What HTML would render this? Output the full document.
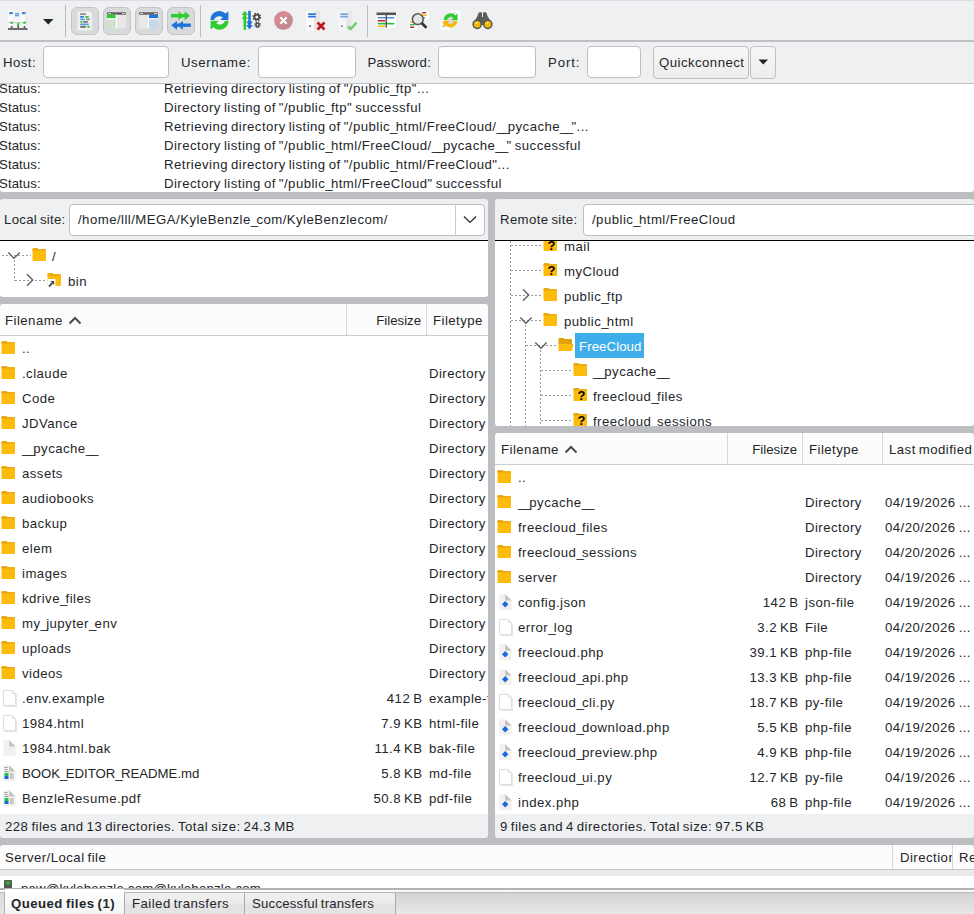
<!DOCTYPE html>
<html><head><meta charset="utf-8"><style>
html,body{margin:0;padding:0;width:974px;height:914px;overflow:hidden;background:#eff0f1}
div{position:absolute}

.u{letter-spacing:-1.7px}
.t{font-family:"Liberation Sans",sans-serif;font-size:13.2px;letter-spacing:0.46px;line-height:19px;word-spacing:-1.1px;color:#232629;white-space:nowrap}
</style></head><body>
<div style="left:0px;top:0px;width:974px;height:40px;background:#eff0f1"></div>
<div style="left:0px;top:0px;width:974px;height:1px;background:#dcdde0"></div>
<div style="left:0px;top:40px;width:974px;height:2px;background:#bfc0c3"></div>
<svg style="position:absolute;left:7px;top:9px" width="22" height="23" viewBox="0 0 22 23"><rect x="1" y="1.7" width="5.3" height="15" fill="#fafafa"/><rect x="7.1" y="3" width="5.5" height="13.7" fill="#f4f4f4"/><rect x="13.5" y="1.7" width="6.8" height="15" fill="#f8f8f8"/><rect x="18.6" y="1.7" width="1.7" height="15" fill="#e6e6e6"/><rect x="2" y="3" width="4" height="2.2" rx="1" fill="#3f8ad8"/><rect x="8" y="4.1" width="4" height="1.3" fill="#3f8ad8"/><rect x="8" y="6" width="4" height="1.3" fill="#5a9de0"/><rect x="14.7" y="3" width="4" height="2.2" rx="1" fill="#3f8ad8"/><rect x="1" y="13.3" width="19" height="0.8" fill="#c4c4c4"/><rect x="3.9" y="17" width="1.6" height="3" fill="#555"/><rect x="10.4" y="16" width="1.6" height="4" fill="#555"/><rect x="16.7" y="17" width="1.6" height="3" fill="#555"/><rect x="1" y="19" width="19.5" height="2" fill="#6a6a6a"/><circle cx="4.7" cy="13.7" r="1.3" fill="#33cc44"/><circle cx="11.2" cy="15.1" r="1.3" fill="#33cc44"/><circle cx="17.5" cy="13.7" r="1.3" fill="#33cc44"/></svg>
<svg style="position:absolute;left:43px;top:19px" width="11" height="6" viewBox="0 0 11 6"><path d="M0 0H10.5L5.25 5.5Z" fill="#232629"/></svg>
<div style="left:65px;top:5px;width:1px;height:32px;background:#b9babc"></div>
<div style="left:71px;top:7px;width:28px;height:28px;background:#d9dadc;border:1px solid #c3c4c6;border-radius:6px;box-sizing:border-box"></div>
<div style="left:103px;top:7px;width:28px;height:28px;background:#d9dadc;border:1px solid #c3c4c6;border-radius:6px;box-sizing:border-box"></div>
<div style="left:135px;top:7px;width:28px;height:28px;background:#d9dadc;border:1px solid #c3c4c6;border-radius:6px;box-sizing:border-box"></div>
<div style="left:167px;top:7px;width:28px;height:28px;background:#d9dadc;border:1px solid #c3c4c6;border-radius:6px;box-sizing:border-box"></div>
<svg style="position:absolute;left:77px;top:11px" width="16" height="20" viewBox="0 0 16 20"><path d="M0.5 0.5H12L15 3.5V19.5H0.5Z" fill="#efefef"/><path d="M12 0.5L15 3.5H12Z" fill="#fff"/><rect x="3" y="2.3" width="6" height="1.8" rx="0.9" fill="#8a8a8a"/><rect x="3" y="4.9" width="4" height="1.8" rx="0.9" fill="#2a7ae2"/><rect x="8" y="4.9" width="4" height="1.8" rx="0.9" fill="#33cc33"/><rect x="3" y="7.4" width="5" height="1.8" rx="0.9" fill="#5a9de0"/><rect x="9" y="7.4" width="4" height="1.8" rx="0.9" fill="#8a8a8a"/><rect x="3" y="9.9" width="2.5" height="1.8" rx="0.9" fill="#33cc33"/><rect x="6" y="9.9" width="5" height="1.8" rx="0.9" fill="#777"/><rect x="3" y="12.4" width="9" height="1.8" rx="0.9" fill="#5a9de0"/><rect x="3" y="14.9" width="6" height="1.8" rx="0.9" fill="#666"/><rect x="10" y="14.9" width="3" height="1.8" rx="0.9" fill="#33cc33"/></svg>
<svg style="position:absolute;left:106px;top:12px" width="21" height="18" viewBox="0 0 21 18"><rect x="0.8" y="0.2" width="19.2" height="16.4" rx="1" fill="#e8e8e8"/><rect x="0.8" y="0.2" width="19.2" height="2.5" rx="1" fill="#5f5f5f"/><rect x="0.8" y="2.7" width="9" height="3.6" fill="#2ecc2e"/><rect x="0.8" y="7.3" width="9" height="9.3" fill="#cfe3cc"/><rect x="9.8" y="2.7" width="1.2" height="13.9" fill="#fff"/><rect x="0.8" y="6.3" width="9" height="1" fill="#fff"/><rect x="2" y="1" width="3" height="0.9" fill="#ddd"/><rect x="16" y="1" width="3" height="0.9" fill="#ddd"/></svg>
<svg style="position:absolute;left:138px;top:12px" width="21" height="18" viewBox="0 0 21 18"><rect x="0.8" y="0.2" width="19.2" height="16.4" rx="1" fill="#e8e8e8"/><rect x="0.8" y="0.2" width="19.2" height="2.5" rx="1" fill="#5f5f5f"/><rect x="11" y="2.7" width="9" height="3.6" fill="#1e74d8"/><rect x="11" y="7.3" width="9" height="9.3" fill="#c9d8e6"/><rect x="9.8" y="2.7" width="1.2" height="13.9" fill="#fff"/><rect x="11" y="6.3" width="9" height="1" fill="#fff"/><rect x="2" y="1" width="3" height="0.9" fill="#ddd"/><rect x="16" y="1" width="3" height="0.9" fill="#ddd"/></svg>
<svg style="position:absolute;left:170px;top:10px" width="22" height="21" viewBox="0 0 22 21"><rect x="1" y="4" width="15" height="3.4" fill="#2ecc2e"/><path d="M8.5 1.2L13.5 5.7L8.5 10.2Z" fill="#2ecc2e"/><path d="M14.6 1.2L20 5.7L14.6 10.2Z" fill="#2ecc2e"/><rect x="6" y="13.5" width="14.8" height="3.4" fill="#1e74d8"/><path d="M7 11L1.2 15.2L7 19.8Z" fill="#1e74d8"/><path d="M13 11L7.2 15.2L13 19.8Z" fill="#1e74d8"/></svg>
<div style="left:200px;top:5px;width:1px;height:32px;background:#b9babc"></div>
<svg style="position:absolute;left:209px;top:10px" width="21" height="21" viewBox="0 0 21 21"><path d="M1.4 10A9 9 0 0 1 16.6 3.6L19.4 1.2V10H11.2L13.7 7.5A5.4 5.4 0 0 0 5 10Z" fill="#1e74d8"/><path d="M19.6 10.8A9 9 0 0 1 4.4 17.2L1.6 19.6V10.8H9.8L7.3 13.3A5.4 5.4 0 0 0 16 10.8Z" fill="#2ecc2e"/></svg>
<svg style="position:absolute;left:241px;top:10px" width="21" height="21" viewBox="0 0 21 21"><rect x="2.5" y="3" width="2.6" height="16.8" fill="#2ecc2e"/><path d="M0.6 5L3.8 0.8L7 5Z" fill="#2ecc2e"/><path d="M0.6 9L3.8 5L7 9Z" fill="#2ecc2e"/><rect x="7.2" y="0.8" width="2.6" height="16" fill="#1e74d8"/><path d="M5.2 15L8.5 19.6L11.8 15Z" fill="#1e74d8"/><path d="M5.2 11.5L8.5 16L11.8 11.5Z" fill="#1e74d8"/><g fill="none" stroke="#4a4a4a"><circle cx="15.8" cy="7" r="2.4" stroke-width="1.8"/><circle cx="15.8" cy="7" r="3.6" stroke-width="1.6" stroke-dasharray="1.4 1.43"/><circle cx="16.5" cy="14.8" r="1.6" stroke-width="1.5"/><circle cx="16.5" cy="14.8" r="2.7" stroke-width="1.3" stroke-dasharray="1.1 1.02"/></g></svg>
<svg style="position:absolute;left:273px;top:10px" width="21" height="21" viewBox="0 0 21 21"><circle cx="10.5" cy="10.5" r="9.4" fill="#d88890"/><path d="M17.1 3.9A9.4 9.4 0 0 1 3.9 17.1Z" fill="#c38a90"/><path d="M7.3 7.3L13.7 13.7M13.7 7.3L7.3 13.7" stroke="#fff" stroke-width="2.2"/></svg>
<svg style="position:absolute;left:305px;top:10px" width="22" height="21" viewBox="0 0 22 21"><rect x="1" y="1" width="14" height="19.5" fill="#fbfbfb"/><rect x="9" y="1" width="6" height="19.5" fill="#e6e6e6"/><rect x="3" y="3.2" width="8" height="1.8" rx="0.9" fill="#2a78d6"/><rect x="3" y="5.8" width="8" height="1.8" rx="0.9" fill="#2a78d6"/><circle cx="5" cy="16.2" r="0.9" fill="#444"/><path d="M12.5 12.5L19.5 19.5M19.5 12.5L12.5 19.5" stroke="#c4161c" stroke-width="2.6"/></svg>
<svg style="position:absolute;left:337px;top:10px" width="22" height="21" viewBox="0 0 22 21"><rect x="1" y="1" width="14" height="19.5" fill="#f5f5f5"/><rect x="9" y="1" width="6" height="19.5" fill="#e8e8e8"/><rect x="3" y="3.2" width="8" height="1.8" rx="0.9" fill="#7aa8e0"/><rect x="3" y="5.8" width="8" height="1.8" rx="0.9" fill="#7aa8e0"/><circle cx="5" cy="16.2" r="0.9" fill="#777"/><path d="M11 16.5L13.8 19L19.5 12.5" stroke="#6fd06f" stroke-width="2.6" fill="none"/></svg>
<div style="left:367px;top:5px;width:1px;height:32px;background:#b9babc"></div>
<svg style="position:absolute;left:376px;top:12px" width="21" height="17" viewBox="0 0 21 17"><rect x="0.5" y="0.5" width="19.5" height="15" fill="#fff"/><rect x="0.5" y="0.5" width="19.5" height="2.6" fill="#555"/><rect x="1.5" y="5" width="17" height="1.6" rx="0.8" fill="#4a8fe0"/><rect x="1.5" y="8" width="8" height="1.6" rx="0.8" fill="#c9202a"/><rect x="1.5" y="10.8" width="17" height="1.6" rx="0.8" fill="#33bb44"/><rect x="1.5" y="13.4" width="8" height="1.6" rx="0.8" fill="#f5b800"/><rect x="9.6" y="2" width="1.4" height="13.5" fill="#555"/></svg>
<svg style="position:absolute;left:408px;top:10px" width="22" height="21" viewBox="0 0 22 21"><rect x="13" y="0.5" width="8" height="9" fill="#fff"/><rect x="14" y="2" width="4" height="1.4" fill="#c9202a"/><rect x="14" y="4.5" width="5" height="1.4" fill="#f5b800"/><rect x="14" y="7" width="3" height="1.4" fill="#33bb44"/><rect x="1" y="10.5" width="8" height="9" fill="#fff"/><rect x="2" y="11.5" width="3" height="1.4" fill="#f5b800"/><rect x="2" y="14" width="5" height="1.4" fill="#33bb44"/><rect x="2" y="16.5" width="4" height="1.4" fill="#c9202a"/><circle cx="9.8" cy="9.2" r="5.4" fill="#e6e6e6" stroke="#555" stroke-width="1.5"/><path d="M13.6 13L18.5 17.8" stroke="#333" stroke-width="2.6"/></svg>
<svg style="position:absolute;left:440px;top:10px" width="22" height="21" viewBox="0 0 22 21"><rect x="11" y="0.5" width="9.5" height="9.5" fill="#fff"/><rect x="12.5" y="2.5" width="4" height="1" fill="#ccc"/><rect x="12.5" y="5" width="5" height="1" fill="#ccc"/><rect x="0.5" y="10" width="9.5" height="10" fill="#fff"/><rect x="2" y="12" width="4" height="1" fill="#ccc"/><rect x="2" y="16" width="4" height="1" fill="#ccc"/><circle cx="10.5" cy="10.5" r="4" fill="#d9d9d9"/><path d="M3.8 10A6.8 6.8 0 0 1 15.6 5.6L17.6 3.6V10H11.4L13.4 8A3.6 3.6 0 0 0 7.2 10Z" fill="#2ecc2e"/><path d="M17.2 10.8A6.8 6.8 0 0 1 5.4 15.2L3.4 17.2V10.8H9.6L7.6 12.8A3.6 3.6 0 0 0 13.8 10.8Z" fill="#f5b800"/></svg>
<svg style="position:absolute;left:472px;top:11px" width="21" height="19" viewBox="0 0 21 19"><path d="M6.5 2Q8.25 0 10 2V6H11V2Q12.75 0 14.5 2L15.5 5L19.8 12.5V14H1.2V12.5L5.5 5Z" fill="#5d5d5d"/><circle cx="5.2" cy="13.3" r="4.1" fill="#f5b800" stroke="#555" stroke-width="1.5"/><circle cx="15.8" cy="13.3" r="4.1" fill="#f5b800" stroke="#555" stroke-width="1.5"/><path d="M4 13L5.5 11.2" stroke="#fff" stroke-width="1"/><path d="M14.6 13L16.1 11.2" stroke="#fff" stroke-width="1"/></svg>
<div style="left:0px;top:42px;width:974px;height:41px;background:#eff0f1"></div>
<div style="left:0px;top:83px;width:974px;height:1px;background:#c2c3c5"></div>
<div class="t" style="left:3px;top:53px;">Host:</div>
<div style="left:43px;top:46px;width:126px;height:32px;background:#fff;border:1px solid #bcbebf;border-radius:4px;box-sizing:border-box"></div>
<div class="t" style="left:181px;top:53px;letter-spacing:0.6px">Username:</div>
<div style="left:258px;top:46px;width:98px;height:32px;background:#fff;border:1px solid #bcbebf;border-radius:4px;box-sizing:border-box"></div>
<div class="t" style="left:367.5px;top:53px;letter-spacing:0.22px">Password:</div>
<div style="left:438px;top:46px;width:98px;height:32px;background:#fff;border:1px solid #bcbebf;border-radius:4px;box-sizing:border-box"></div>
<div class="t" style="left:548px;top:53px;letter-spacing:0.9px">Port:</div>
<div style="left:587px;top:46px;width:54px;height:32px;background:#fff;border:1px solid #bcbebf;border-radius:4px;box-sizing:border-box"></div>
<div style="left:653px;top:46px;width:96px;height:33px;background:linear-gradient(#f7f7f7,#ededed);border:1px solid #bfc0c2;border-radius:4px;box-sizing:border-box"></div>
<div class="t" style="left:659px;top:53px;">Quickconnect</div>
<div style="left:750px;top:46px;width:26px;height:33px;background:linear-gradient(#f7f7f7,#ededed);border:1px solid #bfc0c2;border-radius:4px;box-sizing:border-box"></div>
<svg style="position:absolute;left:757.5px;top:59px" width="11" height="7" viewBox="0 0 11 7"><path d="M0.5 0.5H10L5.25 5.5Z" fill="#232629"/></svg>
<div style="left:0px;top:84px;width:974px;height:108px;background:#fff"></div>
<div class="t" style="left:-1px;top:79px;letter-spacing:0.1px">Status:</div>
<div class="t" style="left:164px;top:79px;">Retrieving directory listing of &quot;/public<span class="u">_</span>ftp&quot;...</div>
<div class="t" style="left:-1px;top:98px;letter-spacing:0.1px">Status:</div>
<div class="t" style="left:164px;top:98px;">Directory listing of &quot;/public<span class="u">_</span>ftp&quot; successful</div>
<div class="t" style="left:-1px;top:117px;letter-spacing:0.1px">Status:</div>
<div class="t" style="left:164px;top:117px;">Retrieving directory listing of &quot;/public<span class="u">_</span>html/FreeCloud/<span class="u">_</span><span class="u">_</span>pycache<span class="u">_</span><span class="u">_</span>&quot;...</div>
<div class="t" style="left:-1px;top:136px;letter-spacing:0.1px">Status:</div>
<div class="t" style="left:164px;top:136px;">Directory listing of &quot;/public<span class="u">_</span>html/FreeCloud/<span class="u">_</span><span class="u">_</span>pycache<span class="u">_</span><span class="u">_</span>&quot; successful</div>
<div class="t" style="left:-1px;top:155px;letter-spacing:0.1px">Status:</div>
<div class="t" style="left:164px;top:155px;">Retrieving directory listing of &quot;/public<span class="u">_</span>html/FreeCloud&quot;...</div>
<div class="t" style="left:-1px;top:174px;letter-spacing:0.1px">Status:</div>
<div class="t" style="left:164px;top:174px;">Directory listing of &quot;/public<span class="u">_</span>html/FreeCloud&quot; successful</div>
<div style="left:0px;top:192px;width:974px;height:7px;background:#bdbec1"></div>
<div style="left:488px;top:199px;width:7px;height:639px;background:#bdbec1"></div>
<div style="left:0px;top:199px;width:488px;height:41px;background:#eff0f1"></div>
<div class="t" style="left:4px;top:210px;letter-spacing:0.3px">Local site:</div>
<div style="left:69px;top:204px;width:416px;height:32px;background:#fff;border:1px solid #bcbebf;border-radius:4px;box-sizing:border-box"></div>
<div style="left:455px;top:205px;width:1px;height:30px;background:#c9cacc"></div>
<div class="t" style="left:78px;top:210px;">/home/lll/MEGA/KyleBenzle<span class="u">_</span>com/KyleBenzlecom/</div>
<svg style="position:absolute;left:463px;top:215px" width="14" height="9" viewBox="0 0 14 9"><path d="M1 1.5L7 7.5L13 1.5" stroke="#232629" stroke-width="1.2" fill="none"/></svg>
<div style="left:0px;top:240px;width:488px;height:1px;background:#000"></div>
<div style="left:0px;top:241px;width:488px;height:56px;background:#fff"></div>
<div style="left:2px;top:255px;width:29px;height:1px;background:repeating-linear-gradient(90deg,#999 0 2px,transparent 2px 4px)"></div>
<svg style="position:absolute;left:7px;top:250px" width="14" height="10" viewBox="0 0 14 10"><path d="M1.3 2.6L7 8.3L12.7 2.6" stroke="#5e6063" stroke-width="1.4" fill="none"/></svg>
<svg style="position:absolute;left:32px;top:248px" width="15" height="14" viewBox="0 0 15 14"><path d="M0.5 1.2Q0.5 0.2 1.5 0.2H5.6L6.6 1.2H13.2Q14 1.2 14 2V12.2Q14 13 13.2 13H1.3Q0.5 13 0.5 12.2Z" fill="#fdbb0c"/><path d="M0.5 1.2Q0.5 0.2 1.5 0.2H5.6L6.6 1.2H13.2Q14 1.2 14 2V2.6H0.5Z" fill="#e5a50a"/></svg>
<div class="t" style="left:52px;top:247px;">/</div>
<div style="left:14px;top:260px;width:1px;height:21px;background:repeating-linear-gradient(180deg,#999 0 2px,transparent 2px 4px)"></div>
<div style="left:15px;top:280px;width:34px;height:1px;background:repeating-linear-gradient(90deg,#999 0 2px,transparent 2px 4px)"></div>
<svg style="position:absolute;left:25px;top:273px" width="10" height="14" viewBox="0 0 10 14"><path d="M2 1.3L7.7 7L2 12.7" stroke="#5e6063" stroke-width="1.4" fill="none"/></svg>
<svg style="position:absolute;left:47px;top:273px" width="15" height="14" viewBox="0 0 15 14"><path d="M0.5 1.2Q0.5 0.2 1.5 0.2H5.6L6.6 1.2H13.2Q14 1.2 14 2V12.2Q14 13 13.2 13H1.3Q0.5 13 0.5 12.2Z" fill="#fdbb0c"/><path d="M0.5 1.2Q0.5 0.2 1.5 0.2H5.6L6.6 1.2H13.2Q14 1.2 14 2V2.6H0.5Z" fill="#e5a50a"/></svg>
<svg style="position:absolute;left:47px;top:279px" width="10" height="10" viewBox="0 0 10 10"><rect x="0.5" y="0" width="8" height="8.2" fill="#fff"/><path d="M2 7.6L5.4 3.8" stroke="#4a4a4a" stroke-width="1.9" fill="none"/><path d="M3.3 2H7.2V5.9Z" fill="#4a4a4a"/></svg>
<div class="t" style="left:68px;top:272px;">bin</div>
<div style="left:0px;top:297px;width:488px;height:7px;background:#bdbec1"></div>
<div style="left:0px;top:304px;width:488px;height:31px;background:#fcfcfc"></div>
<div style="left:0px;top:335px;width:488px;height:1px;background:#cbcccd"></div>
<div style="left:346px;top:304px;width:1px;height:31px;background:#d6d7d8"></div>
<div style="left:426px;top:304px;width:1px;height:31px;background:#d6d7d8"></div>
<div class="t" style="left:5px;top:311px;">Filename</div>
<svg style="position:absolute;left:68px;top:316px" width="14" height="9" viewBox="0 0 14 9"><path d="M1.5 7.5L7 2L12.5 7.5" stroke="#4d4d4d" stroke-width="2" fill="none"/></svg>
<div class="t" style="right:553.0px;top:311px;text-align:right;letter-spacing:0">Filesize</div>
<div class="t" style="left:433px;top:311px;">Filetype</div>
<div style="left:0px;top:336px;width:488px;height:478px;background:#fff"></div>
<div style="left:0;top:0;width:974px;height:914px;clip-path:inset(336px 486px 100px 0px)">
<svg style="position:absolute;left:1px;top:341px" width="15" height="14" viewBox="0 0 15 14"><path d="M0.5 1.2Q0.5 0.2 1.5 0.2H5.6L6.6 1.2H13.2Q14 1.2 14 2V12.2Q14 13 13.2 13H1.3Q0.5 13 0.5 12.2Z" fill="#fdbb0c"/><path d="M0.5 1.2Q0.5 0.2 1.5 0.2H5.6L6.6 1.2H13.2Q14 1.2 14 2V2.6H0.5Z" fill="#e5a50a"/></svg>
<div class="t" style="left:22px;top:339px;">..</div>
<svg style="position:absolute;left:1px;top:366px" width="15" height="14" viewBox="0 0 15 14"><path d="M0.5 1.2Q0.5 0.2 1.5 0.2H5.6L6.6 1.2H13.2Q14 1.2 14 2V12.2Q14 13 13.2 13H1.3Q0.5 13 0.5 12.2Z" fill="#fdbb0c"/><path d="M0.5 1.2Q0.5 0.2 1.5 0.2H5.6L6.6 1.2H13.2Q14 1.2 14 2V2.6H0.5Z" fill="#e5a50a"/></svg>
<div class="t" style="left:22px;top:364px;">.claude</div>
<div class="t" style="left:429px;top:364px;">Directory</div>
<svg style="position:absolute;left:1px;top:391px" width="15" height="14" viewBox="0 0 15 14"><path d="M0.5 1.2Q0.5 0.2 1.5 0.2H5.6L6.6 1.2H13.2Q14 1.2 14 2V12.2Q14 13 13.2 13H1.3Q0.5 13 0.5 12.2Z" fill="#fdbb0c"/><path d="M0.5 1.2Q0.5 0.2 1.5 0.2H5.6L6.6 1.2H13.2Q14 1.2 14 2V2.6H0.5Z" fill="#e5a50a"/></svg>
<div class="t" style="left:22px;top:389px;">Code</div>
<div class="t" style="left:429px;top:389px;">Directory</div>
<svg style="position:absolute;left:1px;top:416px" width="15" height="14" viewBox="0 0 15 14"><path d="M0.5 1.2Q0.5 0.2 1.5 0.2H5.6L6.6 1.2H13.2Q14 1.2 14 2V12.2Q14 13 13.2 13H1.3Q0.5 13 0.5 12.2Z" fill="#fdbb0c"/><path d="M0.5 1.2Q0.5 0.2 1.5 0.2H5.6L6.6 1.2H13.2Q14 1.2 14 2V2.6H0.5Z" fill="#e5a50a"/></svg>
<div class="t" style="left:22px;top:414px;">JDVance</div>
<div class="t" style="left:429px;top:414px;">Directory</div>
<svg style="position:absolute;left:1px;top:441px" width="15" height="14" viewBox="0 0 15 14"><path d="M0.5 1.2Q0.5 0.2 1.5 0.2H5.6L6.6 1.2H13.2Q14 1.2 14 2V12.2Q14 13 13.2 13H1.3Q0.5 13 0.5 12.2Z" fill="#fdbb0c"/><path d="M0.5 1.2Q0.5 0.2 1.5 0.2H5.6L6.6 1.2H13.2Q14 1.2 14 2V2.6H0.5Z" fill="#e5a50a"/></svg>
<div class="t" style="left:22px;top:439px;"><span class="u">_</span><span class="u">_</span>pycache<span class="u">_</span><span class="u">_</span></div>
<div class="t" style="left:429px;top:439px;">Directory</div>
<svg style="position:absolute;left:1px;top:466px" width="15" height="14" viewBox="0 0 15 14"><path d="M0.5 1.2Q0.5 0.2 1.5 0.2H5.6L6.6 1.2H13.2Q14 1.2 14 2V12.2Q14 13 13.2 13H1.3Q0.5 13 0.5 12.2Z" fill="#fdbb0c"/><path d="M0.5 1.2Q0.5 0.2 1.5 0.2H5.6L6.6 1.2H13.2Q14 1.2 14 2V2.6H0.5Z" fill="#e5a50a"/></svg>
<div class="t" style="left:22px;top:464px;">assets</div>
<div class="t" style="left:429px;top:464px;">Directory</div>
<svg style="position:absolute;left:1px;top:491px" width="15" height="14" viewBox="0 0 15 14"><path d="M0.5 1.2Q0.5 0.2 1.5 0.2H5.6L6.6 1.2H13.2Q14 1.2 14 2V12.2Q14 13 13.2 13H1.3Q0.5 13 0.5 12.2Z" fill="#fdbb0c"/><path d="M0.5 1.2Q0.5 0.2 1.5 0.2H5.6L6.6 1.2H13.2Q14 1.2 14 2V2.6H0.5Z" fill="#e5a50a"/></svg>
<div class="t" style="left:22px;top:489px;">audiobooks</div>
<div class="t" style="left:429px;top:489px;">Directory</div>
<svg style="position:absolute;left:1px;top:516px" width="15" height="14" viewBox="0 0 15 14"><path d="M0.5 1.2Q0.5 0.2 1.5 0.2H5.6L6.6 1.2H13.2Q14 1.2 14 2V12.2Q14 13 13.2 13H1.3Q0.5 13 0.5 12.2Z" fill="#fdbb0c"/><path d="M0.5 1.2Q0.5 0.2 1.5 0.2H5.6L6.6 1.2H13.2Q14 1.2 14 2V2.6H0.5Z" fill="#e5a50a"/></svg>
<div class="t" style="left:22px;top:514px;">backup</div>
<div class="t" style="left:429px;top:514px;">Directory</div>
<svg style="position:absolute;left:1px;top:541px" width="15" height="14" viewBox="0 0 15 14"><path d="M0.5 1.2Q0.5 0.2 1.5 0.2H5.6L6.6 1.2H13.2Q14 1.2 14 2V12.2Q14 13 13.2 13H1.3Q0.5 13 0.5 12.2Z" fill="#fdbb0c"/><path d="M0.5 1.2Q0.5 0.2 1.5 0.2H5.6L6.6 1.2H13.2Q14 1.2 14 2V2.6H0.5Z" fill="#e5a50a"/></svg>
<div class="t" style="left:22px;top:539px;">elem</div>
<div class="t" style="left:429px;top:539px;">Directory</div>
<svg style="position:absolute;left:1px;top:566px" width="15" height="14" viewBox="0 0 15 14"><path d="M0.5 1.2Q0.5 0.2 1.5 0.2H5.6L6.6 1.2H13.2Q14 1.2 14 2V12.2Q14 13 13.2 13H1.3Q0.5 13 0.5 12.2Z" fill="#fdbb0c"/><path d="M0.5 1.2Q0.5 0.2 1.5 0.2H5.6L6.6 1.2H13.2Q14 1.2 14 2V2.6H0.5Z" fill="#e5a50a"/></svg>
<div class="t" style="left:22px;top:564px;">images</div>
<div class="t" style="left:429px;top:564px;">Directory</div>
<svg style="position:absolute;left:1px;top:591px" width="15" height="14" viewBox="0 0 15 14"><path d="M0.5 1.2Q0.5 0.2 1.5 0.2H5.6L6.6 1.2H13.2Q14 1.2 14 2V12.2Q14 13 13.2 13H1.3Q0.5 13 0.5 12.2Z" fill="#fdbb0c"/><path d="M0.5 1.2Q0.5 0.2 1.5 0.2H5.6L6.6 1.2H13.2Q14 1.2 14 2V2.6H0.5Z" fill="#e5a50a"/></svg>
<div class="t" style="left:22px;top:589px;">kdrive<span class="u">_</span>files</div>
<div class="t" style="left:429px;top:589px;">Directory</div>
<svg style="position:absolute;left:1px;top:616px" width="15" height="14" viewBox="0 0 15 14"><path d="M0.5 1.2Q0.5 0.2 1.5 0.2H5.6L6.6 1.2H13.2Q14 1.2 14 2V12.2Q14 13 13.2 13H1.3Q0.5 13 0.5 12.2Z" fill="#fdbb0c"/><path d="M0.5 1.2Q0.5 0.2 1.5 0.2H5.6L6.6 1.2H13.2Q14 1.2 14 2V2.6H0.5Z" fill="#e5a50a"/></svg>
<div class="t" style="left:22px;top:614px;">my<span class="u">_</span>jupyter<span class="u">_</span>env</div>
<div class="t" style="left:429px;top:614px;">Directory</div>
<svg style="position:absolute;left:1px;top:641px" width="15" height="14" viewBox="0 0 15 14"><path d="M0.5 1.2Q0.5 0.2 1.5 0.2H5.6L6.6 1.2H13.2Q14 1.2 14 2V12.2Q14 13 13.2 13H1.3Q0.5 13 0.5 12.2Z" fill="#fdbb0c"/><path d="M0.5 1.2Q0.5 0.2 1.5 0.2H5.6L6.6 1.2H13.2Q14 1.2 14 2V2.6H0.5Z" fill="#e5a50a"/></svg>
<div class="t" style="left:22px;top:639px;">uploads</div>
<div class="t" style="left:429px;top:639px;">Directory</div>
<svg style="position:absolute;left:1px;top:666px" width="15" height="14" viewBox="0 0 15 14"><path d="M0.5 1.2Q0.5 0.2 1.5 0.2H5.6L6.6 1.2H13.2Q14 1.2 14 2V12.2Q14 13 13.2 13H1.3Q0.5 13 0.5 12.2Z" fill="#fdbb0c"/><path d="M0.5 1.2Q0.5 0.2 1.5 0.2H5.6L6.6 1.2H13.2Q14 1.2 14 2V2.6H0.5Z" fill="#e5a50a"/></svg>
<div class="t" style="left:22px;top:664px;">videos</div>
<div class="t" style="left:429px;top:664px;">Directory</div>
<svg style="position:absolute;left:3px;top:690px" width="15" height="18" viewBox="0 0 15 18"><path d="M1.5 16.5H13.5V4.5" stroke="#e6e6e6" stroke-width="1.2" fill="none"/><path d="M0.5 0.5H9.5L12.5 3.5V15.5H0.5Z" fill="#fff" stroke="#dedede" stroke-width="1"/><path d="M9.5 0.5V3.5H12.5" stroke="#dedede" fill="none"/></svg>
<div class="t" style="left:22px;top:689px;">.env.example</div>
<div class="t" style="right:551.5px;top:689px;text-align:right;">412 B</div>
<div class="t" style="left:429px;top:689px;">example-file</div>
<svg style="position:absolute;left:3px;top:715px" width="15" height="18" viewBox="0 0 15 18"><path d="M1.5 16.5H13.5V4.5" stroke="#e6e6e6" stroke-width="1.2" fill="none"/><path d="M0.5 0.5H9.5L12.5 3.5V15.5H0.5Z" fill="#fff" stroke="#dedede" stroke-width="1"/><path d="M9.5 0.5V3.5H12.5" stroke="#dedede" fill="none"/></svg>
<div class="t" style="left:22px;top:714px;">1984.html</div>
<div class="t" style="right:551.5px;top:714px;text-align:right;">7.9 KB</div>
<div class="t" style="left:429px;top:714px;">html-file</div>
<svg style="position:absolute;left:3px;top:740px" width="15" height="18" viewBox="0 0 15 18"><path d="M0.2 1Q0.2 0.2 1 0.2H6.2L12.6 6.6V15.4Q12.6 16.2 11.8 16.2H1Q0.2 16.2 0.2 15.4Z" fill="#f2f1f0"/><path d="M6.2 0.2L12.6 6.6H6.2Z" fill="#c3c2bf"/></svg>
<div class="t" style="left:22px;top:739px;">1984.html.bak</div>
<div class="t" style="right:551.5px;top:739px;text-align:right;">11.4 KB</div>
<div class="t" style="left:429px;top:739px;">bak-file</div>
<svg style="position:absolute;left:3px;top:765px" width="15" height="18" viewBox="0 0 15 18"><path d="M0.2 1Q0.2 0.2 1 0.2H6.2L12.6 6.6V15.4Q12.6 16.2 11.8 16.2H1Q0.2 16.2 0.2 15.4Z" fill="#f2f1f0"/><path d="M6.2 0.2L12.6 6.6H6.2Z" fill="#c3c2bf"/></svg>
<svg style="position:absolute;left:3px;top:765px" width="15" height="18" viewBox="0 0 15 18"><rect x="1.5" y="2" width="3" height="1" fill="#9a9a9a"/><rect x="1.5" y="4" width="3" height="1" fill="#9a9a9a"/><rect x="1.5" y="6" width="4" height="1" fill="#9a9a9a"/><rect x="1.5" y="8" width="4" height="3" fill="#23c04a"/><rect x="1.5" y="11" width="4" height="3" fill="#1f64d6"/><rect x="7" y="8.5" width="3.5" height="1" fill="#9a9a9a"/><rect x="7" y="10.5" width="3.5" height="1" fill="#9a9a9a"/><rect x="7" y="12.5" width="3.5" height="1" fill="#9a9a9a"/></svg>
<div class="t" style="left:22px;top:764px;letter-spacing:0">BOOK<span class="u">_</span>EDITOR<span class="u">_</span>README.md</div>
<div class="t" style="right:551.5px;top:764px;text-align:right;">5.8 KB</div>
<div class="t" style="left:429px;top:764px;">md-file</div>
<svg style="position:absolute;left:3px;top:790px" width="15" height="18" viewBox="0 0 15 18"><path d="M0.2 1Q0.2 0.2 1 0.2H6.2L12.6 6.6V15.4Q12.6 16.2 11.8 16.2H1Q0.2 16.2 0.2 15.4Z" fill="#f2f1f0"/><path d="M6.2 0.2L12.6 6.6H6.2Z" fill="#c3c2bf"/></svg>
<svg style="position:absolute;left:3px;top:790px" width="15" height="18" viewBox="0 0 15 18"><rect x="1.5" y="2" width="3" height="1" fill="#9a9a9a"/><rect x="1.5" y="4" width="3" height="1" fill="#9a9a9a"/><rect x="1.5" y="6" width="4" height="1" fill="#9a9a9a"/><rect x="1.5" y="8" width="4" height="3" fill="#23c04a"/><rect x="1.5" y="11" width="4" height="3" fill="#1f64d6"/><rect x="7" y="8.5" width="3.5" height="1" fill="#9a9a9a"/><rect x="7" y="10.5" width="3.5" height="1" fill="#9a9a9a"/><rect x="7" y="12.5" width="3.5" height="1" fill="#9a9a9a"/></svg>
<div class="t" style="left:22px;top:789px;">BenzleResume.pdf</div>
<div class="t" style="right:551.5px;top:789px;text-align:right;">50.8 KB</div>
<div class="t" style="left:429px;top:789px;">pdf-file</div>
</div>
<div style="left:0px;top:814px;width:488px;height:24px;background:#eff0f1"></div>
<div class="t" style="left:5px;top:817px;">228 files and 13 directories. Total size: 24.3 MB</div>
<div style="left:495px;top:199px;width:479px;height:41px;background:#eff0f1"></div>
<div class="t" style="left:500px;top:210px;letter-spacing:0.38px">Remote site:</div>
<div style="left:583px;top:204px;width:400px;height:32px;background:#fff;border:1px solid #bcbebf;border-radius:4px;box-sizing:border-box"></div>
<div class="t" style="left:592px;top:210px;">/public<span class="u">_</span>html/FreeCloud</div>
<div style="left:495px;top:240px;width:479px;height:1px;background:#000"></div>
<div style="left:495px;top:241px;width:479px;height:185px;background:#fff"></div>
<div style="left:0;top:0;width:974px;height:914px;clip-path:inset(241px 0px 488px 495px)">
<div style="left:510px;top:241px;width:1px;height:185px;background:repeating-linear-gradient(180deg,#999 0 2px,transparent 2px 4px)"></div>
<div style="left:511px;top:245px;width:32px;height:1px;background:repeating-linear-gradient(90deg,#999 0 2px,transparent 2px 4px)"></div>
<svg style="position:absolute;left:543px;top:238px" width="15" height="14" viewBox="0 0 15 14"><path d="M0.5 1.2Q0.5 0.2 1.5 0.2H5.6L6.6 1.2H13.2Q14 1.2 14 2V12.2Q14 13 13.2 13H1.3Q0.5 13 0.5 12.2Z" fill="#fdbb0c"/><path d="M0.5 1.2Q0.5 0.2 1.5 0.2H5.6L6.6 1.2H13.2Q14 1.2 14 2V2.6H0.5Z" fill="#e5a50a"/></svg>
<div style="left:544px;top:237.5px;width:15px;height:16px;font:bold 13px 'Liberation Sans',sans-serif;color:#000;text-align:center;line-height:16px">?</div>
<div class="t" style="left:564px;top:237px;">mail</div>
<div style="left:511px;top:270px;width:32px;height:1px;background:repeating-linear-gradient(90deg,#999 0 2px,transparent 2px 4px)"></div>
<svg style="position:absolute;left:543px;top:263px" width="15" height="14" viewBox="0 0 15 14"><path d="M0.5 1.2Q0.5 0.2 1.5 0.2H5.6L6.6 1.2H13.2Q14 1.2 14 2V12.2Q14 13 13.2 13H1.3Q0.5 13 0.5 12.2Z" fill="#fdbb0c"/><path d="M0.5 1.2Q0.5 0.2 1.5 0.2H5.6L6.6 1.2H13.2Q14 1.2 14 2V2.6H0.5Z" fill="#e5a50a"/></svg>
<div style="left:544px;top:262.5px;width:15px;height:16px;font:bold 13px 'Liberation Sans',sans-serif;color:#000;text-align:center;line-height:16px">?</div>
<div class="t" style="left:564px;top:262px;">myCloud</div>
<div style="left:511px;top:295px;width:32px;height:1px;background:repeating-linear-gradient(90deg,#999 0 2px,transparent 2px 4px)"></div>
<svg style="position:absolute;left:521px;top:288px" width="10" height="14" viewBox="0 0 10 14"><path d="M2 1.3L7.7 7L2 12.7" stroke="#5e6063" stroke-width="1.4" fill="none"/></svg>
<svg style="position:absolute;left:543px;top:288px" width="15" height="14" viewBox="0 0 15 14"><path d="M0.5 1.2Q0.5 0.2 1.5 0.2H5.6L6.6 1.2H13.2Q14 1.2 14 2V12.2Q14 13 13.2 13H1.3Q0.5 13 0.5 12.2Z" fill="#fdbb0c"/><path d="M0.5 1.2Q0.5 0.2 1.5 0.2H5.6L6.6 1.2H13.2Q14 1.2 14 2V2.6H0.5Z" fill="#e5a50a"/></svg>
<div class="t" style="left:564px;top:287px;">public<span class="u">_</span>ftp</div>
<div style="left:511px;top:320px;width:32px;height:1px;background:repeating-linear-gradient(90deg,#999 0 2px,transparent 2px 4px)"></div>
<svg style="position:absolute;left:518.5px;top:315px" width="14" height="10" viewBox="0 0 14 10"><path d="M1.3 2.6L7 8.3L12.7 2.6" stroke="#5e6063" stroke-width="1.4" fill="none"/></svg>
<svg style="position:absolute;left:543px;top:313px" width="15" height="14" viewBox="0 0 15 14"><path d="M0.5 1.2Q0.5 0.2 1.5 0.2H5.6L6.6 1.2H13.2Q14 1.2 14 2V12.2Q14 13 13.2 13H1.3Q0.5 13 0.5 12.2Z" fill="#fdbb0c"/><path d="M0.5 1.2Q0.5 0.2 1.5 0.2H5.6L6.6 1.2H13.2Q14 1.2 14 2V2.6H0.5Z" fill="#e5a50a"/></svg>
<div class="t" style="left:564px;top:312px;">public<span class="u">_</span>html</div>
<div style="left:525px;top:325px;width:1px;height:101px;background:repeating-linear-gradient(180deg,#999 0 2px,transparent 2px 4px)"></div>
<div style="left:526px;top:345px;width:32px;height:1px;background:repeating-linear-gradient(90deg,#999 0 2px,transparent 2px 4px)"></div>
<svg style="position:absolute;left:533.5px;top:340px" width="14" height="10" viewBox="0 0 14 10"><path d="M1.3 2.6L7 8.3L12.7 2.6" stroke="#5e6063" stroke-width="1.4" fill="none"/></svg>
<div style="left:575px;top:333px;width:69px;height:25px;background:#3daee9"></div>
<svg style="position:absolute;left:558px;top:338px" width="17" height="14" viewBox="0 0 17 14"><path d="M0.5 1Q0.5 0 1.5 0H5.8L6.8 1H13Q14 1 14 2V6H0.5Z" fill="#e3a20b"/><path d="M0.5 6H15.5L14.2 12.2Q14 13 13.2 13H1.3Q0.5 13 0.5 12.2Z" fill="#fdbb0c"/></svg>
<div class="t" style="left:579px;top:337px;color:#fff;letter-spacing:0.1px">FreeCloud</div>
<div style="left:540px;top:350px;width:1px;height:76px;background:repeating-linear-gradient(180deg,#999 0 2px,transparent 2px 4px)"></div>
<div style="left:541px;top:370px;width:32px;height:1px;background:repeating-linear-gradient(90deg,#999 0 2px,transparent 2px 4px)"></div>
<svg style="position:absolute;left:573px;top:363px" width="15" height="14" viewBox="0 0 15 14"><path d="M0.5 1.2Q0.5 0.2 1.5 0.2H5.6L6.6 1.2H13.2Q14 1.2 14 2V12.2Q14 13 13.2 13H1.3Q0.5 13 0.5 12.2Z" fill="#fdbb0c"/><path d="M0.5 1.2Q0.5 0.2 1.5 0.2H5.6L6.6 1.2H13.2Q14 1.2 14 2V2.6H0.5Z" fill="#e5a50a"/></svg>
<div class="t" style="left:593px;top:362px;"><span class="u">_</span><span class="u">_</span>pycache<span class="u">_</span><span class="u">_</span></div>
<div style="left:541px;top:395px;width:32px;height:1px;background:repeating-linear-gradient(90deg,#999 0 2px,transparent 2px 4px)"></div>
<svg style="position:absolute;left:573px;top:388px" width="15" height="14" viewBox="0 0 15 14"><path d="M0.5 1.2Q0.5 0.2 1.5 0.2H5.6L6.6 1.2H13.2Q14 1.2 14 2V12.2Q14 13 13.2 13H1.3Q0.5 13 0.5 12.2Z" fill="#fdbb0c"/><path d="M0.5 1.2Q0.5 0.2 1.5 0.2H5.6L6.6 1.2H13.2Q14 1.2 14 2V2.6H0.5Z" fill="#e5a50a"/></svg>
<div style="left:574px;top:387.5px;width:15px;height:16px;font:bold 13px 'Liberation Sans',sans-serif;color:#000;text-align:center;line-height:16px">?</div>
<div class="t" style="left:593px;top:387px;">freecloud<span class="u">_</span>files</div>
<div style="left:541px;top:420px;width:32px;height:1px;background:repeating-linear-gradient(90deg,#999 0 2px,transparent 2px 4px)"></div>
<svg style="position:absolute;left:573px;top:413px" width="15" height="14" viewBox="0 0 15 14"><path d="M0.5 1.2Q0.5 0.2 1.5 0.2H5.6L6.6 1.2H13.2Q14 1.2 14 2V12.2Q14 13 13.2 13H1.3Q0.5 13 0.5 12.2Z" fill="#fdbb0c"/><path d="M0.5 1.2Q0.5 0.2 1.5 0.2H5.6L6.6 1.2H13.2Q14 1.2 14 2V2.6H0.5Z" fill="#e5a50a"/></svg>
<div style="left:574px;top:412.5px;width:15px;height:16px;font:bold 13px 'Liberation Sans',sans-serif;color:#000;text-align:center;line-height:16px">?</div>
<div class="t" style="left:593px;top:412px;">freecloud<span class="u">_</span>sessions</div>
</div>
<div style="left:495px;top:426px;width:479px;height:7px;background:#bdbec1"></div>
<div style="left:495px;top:433px;width:479px;height:31px;background:#fcfcfc"></div>
<div style="left:495px;top:464px;width:479px;height:1px;background:#cbcccd"></div>
<div style="left:727px;top:433px;width:1px;height:31px;background:#d6d7d8"></div>
<div style="left:802px;top:433px;width:1px;height:31px;background:#d6d7d8"></div>
<div style="left:882px;top:433px;width:1px;height:31px;background:#d6d7d8"></div>
<div class="t" style="left:501px;top:440px;">Filename</div>
<svg style="position:absolute;left:564px;top:445px" width="14" height="9" viewBox="0 0 14 9"><path d="M1.5 7.5L7 2L12.5 7.5" stroke="#4d4d4d" stroke-width="2" fill="none"/></svg>
<div class="t" style="right:177.0px;top:440px;text-align:right;letter-spacing:0">Filesize</div>
<div class="t" style="left:809px;top:440px;">Filetype</div>
<div class="t" style="left:889px;top:440px;">Last modified</div>
<div style="left:495px;top:465px;width:479px;height:349px;background:#fff"></div>
<div style="left:0;top:0;width:974px;height:914px;clip-path:inset(465px 0px 100px 495px)">
<svg style="position:absolute;left:497px;top:470px" width="15" height="14" viewBox="0 0 15 14"><path d="M0.5 1.2Q0.5 0.2 1.5 0.2H5.6L6.6 1.2H13.2Q14 1.2 14 2V12.2Q14 13 13.2 13H1.3Q0.5 13 0.5 12.2Z" fill="#fdbb0c"/><path d="M0.5 1.2Q0.5 0.2 1.5 0.2H5.6L6.6 1.2H13.2Q14 1.2 14 2V2.6H0.5Z" fill="#e5a50a"/></svg>
<div class="t" style="left:518px;top:468px;">..</div>
<svg style="position:absolute;left:497px;top:495px" width="15" height="14" viewBox="0 0 15 14"><path d="M0.5 1.2Q0.5 0.2 1.5 0.2H5.6L6.6 1.2H13.2Q14 1.2 14 2V12.2Q14 13 13.2 13H1.3Q0.5 13 0.5 12.2Z" fill="#fdbb0c"/><path d="M0.5 1.2Q0.5 0.2 1.5 0.2H5.6L6.6 1.2H13.2Q14 1.2 14 2V2.6H0.5Z" fill="#e5a50a"/></svg>
<div class="t" style="left:518px;top:493px;"><span class="u">_</span><span class="u">_</span>pycache<span class="u">_</span><span class="u">_</span></div>
<div class="t" style="left:805px;top:493px;">Directory</div>
<div class="t" style="left:885px;top:493px;">04/19/2026 ...</div>
<svg style="position:absolute;left:497px;top:520px" width="15" height="14" viewBox="0 0 15 14"><path d="M0.5 1.2Q0.5 0.2 1.5 0.2H5.6L6.6 1.2H13.2Q14 1.2 14 2V12.2Q14 13 13.2 13H1.3Q0.5 13 0.5 12.2Z" fill="#fdbb0c"/><path d="M0.5 1.2Q0.5 0.2 1.5 0.2H5.6L6.6 1.2H13.2Q14 1.2 14 2V2.6H0.5Z" fill="#e5a50a"/></svg>
<div class="t" style="left:518px;top:518px;">freecloud<span class="u">_</span>files</div>
<div class="t" style="left:805px;top:518px;">Directory</div>
<div class="t" style="left:885px;top:518px;">04/20/2026 ...</div>
<svg style="position:absolute;left:497px;top:545px" width="15" height="14" viewBox="0 0 15 14"><path d="M0.5 1.2Q0.5 0.2 1.5 0.2H5.6L6.6 1.2H13.2Q14 1.2 14 2V12.2Q14 13 13.2 13H1.3Q0.5 13 0.5 12.2Z" fill="#fdbb0c"/><path d="M0.5 1.2Q0.5 0.2 1.5 0.2H5.6L6.6 1.2H13.2Q14 1.2 14 2V2.6H0.5Z" fill="#e5a50a"/></svg>
<div class="t" style="left:518px;top:543px;">freecloud<span class="u">_</span>sessions</div>
<div class="t" style="left:805px;top:543px;">Directory</div>
<div class="t" style="left:885px;top:543px;">04/20/2026 ...</div>
<svg style="position:absolute;left:497px;top:570px" width="15" height="14" viewBox="0 0 15 14"><path d="M0.5 1.2Q0.5 0.2 1.5 0.2H5.6L6.6 1.2H13.2Q14 1.2 14 2V12.2Q14 13 13.2 13H1.3Q0.5 13 0.5 12.2Z" fill="#fdbb0c"/><path d="M0.5 1.2Q0.5 0.2 1.5 0.2H5.6L6.6 1.2H13.2Q14 1.2 14 2V2.6H0.5Z" fill="#e5a50a"/></svg>
<div class="t" style="left:518px;top:568px;">server</div>
<div class="t" style="left:805px;top:568px;">Directory</div>
<div class="t" style="left:885px;top:568px;">04/19/2026 ...</div>
<svg style="position:absolute;left:499px;top:594px" width="15" height="18" viewBox="0 0 15 18"><path d="M0.2 1Q0.2 0.2 1 0.2H6.2L12.6 6.6V15.4Q12.6 16.2 11.8 16.2H1Q0.2 16.2 0.2 15.4Z" fill="#f2f1f0"/><path d="M6.2 0.2L12.6 6.6H6.2Z" fill="#c3c2bf"/></svg>
<svg style="position:absolute;left:499px;top:594px" width="15" height="18" viewBox="0 0 15 18"><path d="M6.2 7L9.4 10.2L6.2 13.4L3 10.2Z" fill="#1b69df"/></svg>
<div class="t" style="left:518px;top:593px;">config.json</div>
<div class="t" style="right:175.5px;top:593px;text-align:right;">142 B</div>
<div class="t" style="left:805px;top:593px;">json-file</div>
<div class="t" style="left:885px;top:593px;">04/19/2026 ...</div>
<svg style="position:absolute;left:499px;top:619px" width="15" height="18" viewBox="0 0 15 18"><path d="M1.5 16.5H13.5V4.5" stroke="#e6e6e6" stroke-width="1.2" fill="none"/><path d="M0.5 0.5H9.5L12.5 3.5V15.5H0.5Z" fill="#fff" stroke="#dedede" stroke-width="1"/><path d="M9.5 0.5V3.5H12.5" stroke="#dedede" fill="none"/></svg>
<div class="t" style="left:518px;top:618px;">error<span class="u">_</span>log</div>
<div class="t" style="right:175.5px;top:618px;text-align:right;">3.2 KB</div>
<div class="t" style="left:805px;top:618px;">File</div>
<div class="t" style="left:885px;top:618px;">04/20/2026 ...</div>
<svg style="position:absolute;left:499px;top:644px" width="15" height="18" viewBox="0 0 15 18"><path d="M0.2 1Q0.2 0.2 1 0.2H6.2L12.6 6.6V15.4Q12.6 16.2 11.8 16.2H1Q0.2 16.2 0.2 15.4Z" fill="#f2f1f0"/><path d="M6.2 0.2L12.6 6.6H6.2Z" fill="#c3c2bf"/></svg>
<svg style="position:absolute;left:499px;top:644px" width="15" height="18" viewBox="0 0 15 18"><path d="M6.2 7L9.4 10.2L6.2 13.4L3 10.2Z" fill="#1b69df"/></svg>
<div class="t" style="left:518px;top:643px;">freecloud.php</div>
<div class="t" style="right:175.5px;top:643px;text-align:right;">39.1 KB</div>
<div class="t" style="left:805px;top:643px;">php-file</div>
<div class="t" style="left:885px;top:643px;">04/19/2026 ...</div>
<svg style="position:absolute;left:499px;top:669px" width="15" height="18" viewBox="0 0 15 18"><path d="M0.2 1Q0.2 0.2 1 0.2H6.2L12.6 6.6V15.4Q12.6 16.2 11.8 16.2H1Q0.2 16.2 0.2 15.4Z" fill="#f2f1f0"/><path d="M6.2 0.2L12.6 6.6H6.2Z" fill="#c3c2bf"/></svg>
<svg style="position:absolute;left:499px;top:669px" width="15" height="18" viewBox="0 0 15 18"><path d="M6.2 7L9.4 10.2L6.2 13.4L3 10.2Z" fill="#1b69df"/></svg>
<div class="t" style="left:518px;top:668px;">freecloud<span class="u">_</span>api.php</div>
<div class="t" style="right:175.5px;top:668px;text-align:right;">13.3 KB</div>
<div class="t" style="left:805px;top:668px;">php-file</div>
<div class="t" style="left:885px;top:668px;">04/19/2026 ...</div>
<svg style="position:absolute;left:499px;top:694px" width="15" height="18" viewBox="0 0 15 18"><path d="M1.5 16.5H13.5V4.5" stroke="#e6e6e6" stroke-width="1.2" fill="none"/><path d="M0.5 0.5H9.5L12.5 3.5V15.5H0.5Z" fill="#fff" stroke="#dedede" stroke-width="1"/><path d="M9.5 0.5V3.5H12.5" stroke="#dedede" fill="none"/></svg>
<div class="t" style="left:518px;top:693px;">freecloud<span class="u">_</span>cli.py</div>
<div class="t" style="right:175.5px;top:693px;text-align:right;">18.7 KB</div>
<div class="t" style="left:805px;top:693px;">py-file</div>
<div class="t" style="left:885px;top:693px;">04/19/2026 ...</div>
<svg style="position:absolute;left:499px;top:719px" width="15" height="18" viewBox="0 0 15 18"><path d="M0.2 1Q0.2 0.2 1 0.2H6.2L12.6 6.6V15.4Q12.6 16.2 11.8 16.2H1Q0.2 16.2 0.2 15.4Z" fill="#f2f1f0"/><path d="M6.2 0.2L12.6 6.6H6.2Z" fill="#c3c2bf"/></svg>
<svg style="position:absolute;left:499px;top:719px" width="15" height="18" viewBox="0 0 15 18"><path d="M6.2 7L9.4 10.2L6.2 13.4L3 10.2Z" fill="#1b69df"/></svg>
<div class="t" style="left:518px;top:718px;">freecloud<span class="u">_</span>download.php</div>
<div class="t" style="right:175.5px;top:718px;text-align:right;">5.5 KB</div>
<div class="t" style="left:805px;top:718px;">php-file</div>
<div class="t" style="left:885px;top:718px;">04/19/2026 ...</div>
<svg style="position:absolute;left:499px;top:744px" width="15" height="18" viewBox="0 0 15 18"><path d="M0.2 1Q0.2 0.2 1 0.2H6.2L12.6 6.6V15.4Q12.6 16.2 11.8 16.2H1Q0.2 16.2 0.2 15.4Z" fill="#f2f1f0"/><path d="M6.2 0.2L12.6 6.6H6.2Z" fill="#c3c2bf"/></svg>
<svg style="position:absolute;left:499px;top:744px" width="15" height="18" viewBox="0 0 15 18"><path d="M6.2 7L9.4 10.2L6.2 13.4L3 10.2Z" fill="#1b69df"/></svg>
<div class="t" style="left:518px;top:743px;">freecloud<span class="u">_</span>preview.php</div>
<div class="t" style="right:175.5px;top:743px;text-align:right;">4.9 KB</div>
<div class="t" style="left:805px;top:743px;">php-file</div>
<div class="t" style="left:885px;top:743px;">04/19/2026 ...</div>
<svg style="position:absolute;left:499px;top:769px" width="15" height="18" viewBox="0 0 15 18"><path d="M1.5 16.5H13.5V4.5" stroke="#e6e6e6" stroke-width="1.2" fill="none"/><path d="M0.5 0.5H9.5L12.5 3.5V15.5H0.5Z" fill="#fff" stroke="#dedede" stroke-width="1"/><path d="M9.5 0.5V3.5H12.5" stroke="#dedede" fill="none"/></svg>
<div class="t" style="left:518px;top:768px;">freecloud<span class="u">_</span>ui.py</div>
<div class="t" style="right:175.5px;top:768px;text-align:right;">12.7 KB</div>
<div class="t" style="left:805px;top:768px;">py-file</div>
<div class="t" style="left:885px;top:768px;">04/19/2026 ...</div>
<svg style="position:absolute;left:499px;top:794px" width="15" height="18" viewBox="0 0 15 18"><path d="M0.2 1Q0.2 0.2 1 0.2H6.2L12.6 6.6V15.4Q12.6 16.2 11.8 16.2H1Q0.2 16.2 0.2 15.4Z" fill="#f2f1f0"/><path d="M6.2 0.2L12.6 6.6H6.2Z" fill="#c3c2bf"/></svg>
<svg style="position:absolute;left:499px;top:794px" width="15" height="18" viewBox="0 0 15 18"><path d="M6.2 7L9.4 10.2L6.2 13.4L3 10.2Z" fill="#1b69df"/></svg>
<div class="t" style="left:518px;top:793px;">index.php</div>
<div class="t" style="right:175.5px;top:793px;text-align:right;">68 B</div>
<div class="t" style="left:805px;top:793px;">php-file</div>
<div class="t" style="left:885px;top:793px;">04/19/2026 ...</div>
</div>
<div style="left:495px;top:814px;width:479px;height:24px;background:#eff0f1"></div>
<div class="t" style="left:500px;top:817px;">9 files and 4 directories. Total size: 97.5 KB</div>
<div style="left:0px;top:838px;width:974px;height:7px;background:#bdbec1"></div>
<div style="left:0px;top:845px;width:974px;height:24px;background:#fcfcfc"></div>
<div style="left:0px;top:869px;width:974px;height:1px;background:#c6c7c8"></div>
<div style="left:892px;top:845px;width:1px;height:24px;background:#d6d7d8"></div>
<div style="left:952px;top:845px;width:1px;height:24px;background:#d6d7d8"></div>
<div class="t" style="left:5px;top:848px;">Server/Local file</div>
<div style="left:0;top:0;width:974px;height:914px;clip-path:inset(845px 22px 45px 893px)">
<div class="t" style="left:900px;top:848px;">Direction</div>
</div>
<div class="t" style="left:959px;top:848px;">Re</div>
<div style="left:0px;top:870px;width:974px;height:6px;background:#e8e9ea"></div>
<div style="left:0px;top:876px;width:974px;height:12px;background:#fff"></div>
<div style="left:0;top:0;width:974px;height:914px;clip-path:inset(876px 0px 26px 0px)">
<svg style="position:absolute;left:4px;top:880px" width="9" height="10" viewBox="0 0 9 10"><rect x="0" y="0" width="8" height="10" rx="1" fill="#555"/><rect x="1.5" y="1.5" width="5" height="1.2" fill="#2ecc40"/><rect x="1.5" y="3.5" width="5" height="1.2" fill="#2ecc40"/></svg>
<div class="t" style="left:21px;top:879px;letter-spacing:0.22px">new@kylebenzle.com@kylebenzle.com</div>
</div>
<div style="left:0px;top:888px;width:974px;height:2px;background:#b0b2b3"></div>
<div style="left:0px;top:890px;width:974px;height:24px;background:#fafafa"></div>
<div style="left:0px;top:892px;width:974px;height:1px;background:#b8b9ba"></div>
<div style="left:0px;top:893px;width:974px;height:21px;background:linear-gradient(#d3d3d3,#e7e7e7)"></div>
<div style="left:0px;top:893px;width:4px;height:21px;background:linear-gradient(#dcdcdc,#e4e4e4)"></div>
<div style="left:4px;top:892px;width:1px;height:22px;background:#b0b1b2"></div>
<div style="left:5px;top:889px;width:119px;height:25px;background:linear-gradient(#ffffff,#f4f4f4)"></div>
<div style="left:124px;top:892px;width:1px;height:22px;background:#a9abac"></div>
<div class="t" style="left:11px;top:894px;font-weight:bold">Queued files (1)</div>
<div style="left:125px;top:893px;width:119px;height:21px;background:linear-gradient(#efefef 0,#ececec 10px,#e3e3e3 11px,#e4e4e4 100%)"></div>
<div style="left:244px;top:892px;width:1px;height:22px;background:#a9abac"></div>
<div class="t" style="left:132px;top:894px;">Failed transfers</div>
<div style="left:245px;top:893px;width:150px;height:21px;background:linear-gradient(#efefef 0,#ececec 10px,#e3e3e3 11px,#e4e4e4 100%)"></div>
<div style="left:395px;top:892px;width:1px;height:22px;background:#a9abac"></div>
<div class="t" style="left:252px;top:894px;letter-spacing:0.22px">Successful transfers</div>
<svg style="position:absolute;left:485px;top:199px" width="3" height="3" viewBox="0 0 3 3"><path d="M0 0H3V3A3 3 0 0 0 0 0Z" fill="#bdbec1"/></svg>
<svg style="position:absolute;left:485px;top:294px" width="3" height="3" viewBox="0 0 3 3"><path d="M3 0V3H0A3 3 0 0 0 3 0Z" fill="#bdbec1"/></svg>
<svg style="position:absolute;left:0px;top:294px" width="3" height="3" viewBox="0 0 3 3"><path d="M0 0A3 3 0 0 0 3 3H0Z" fill="#bdbec1"/></svg>
<svg style="position:absolute;left:0px;top:199px" width="3" height="3" viewBox="0 0 3 3"><path d="M0 0H3A3 3 0 0 0 0 3Z" fill="#bdbec1"/></svg>
<svg style="position:absolute;left:485px;top:304px" width="3" height="3" viewBox="0 0 3 3"><path d="M0 0H3V3A3 3 0 0 0 0 0Z" fill="#bdbec1"/></svg>
<svg style="position:absolute;left:0px;top:304px" width="3" height="3" viewBox="0 0 3 3"><path d="M0 0H3A3 3 0 0 0 0 3Z" fill="#bdbec1"/></svg>
<svg style="position:absolute;left:485px;top:835px" width="3" height="3" viewBox="0 0 3 3"><path d="M3 0V3H0A3 3 0 0 0 3 0Z" fill="#bdbec1"/></svg>
<svg style="position:absolute;left:0px;top:835px" width="3" height="3" viewBox="0 0 3 3"><path d="M0 0A3 3 0 0 0 3 3H0Z" fill="#bdbec1"/></svg>
<svg style="position:absolute;left:495px;top:199px" width="3" height="3" viewBox="0 0 3 3"><path d="M0 0H3A3 3 0 0 0 0 3Z" fill="#bdbec1"/></svg>
<svg style="position:absolute;left:971px;top:199px" width="3" height="3" viewBox="0 0 3 3"><path d="M0 0H3V3A3 3 0 0 0 0 0Z" fill="#bdbec1"/></svg>
<svg style="position:absolute;left:495px;top:423px" width="3" height="3" viewBox="0 0 3 3"><path d="M0 0A3 3 0 0 0 3 3H0Z" fill="#bdbec1"/></svg>
<svg style="position:absolute;left:971px;top:423px" width="3" height="3" viewBox="0 0 3 3"><path d="M3 0V3H0A3 3 0 0 0 3 0Z" fill="#bdbec1"/></svg>
<svg style="position:absolute;left:495px;top:433px" width="3" height="3" viewBox="0 0 3 3"><path d="M0 0H3A3 3 0 0 0 0 3Z" fill="#bdbec1"/></svg>
<svg style="position:absolute;left:971px;top:433px" width="3" height="3" viewBox="0 0 3 3"><path d="M0 0H3V3A3 3 0 0 0 0 0Z" fill="#bdbec1"/></svg>
<svg style="position:absolute;left:495px;top:835px" width="3" height="3" viewBox="0 0 3 3"><path d="M0 0A3 3 0 0 0 3 3H0Z" fill="#bdbec1"/></svg>
<svg style="position:absolute;left:971px;top:835px" width="3" height="3" viewBox="0 0 3 3"><path d="M3 0V3H0A3 3 0 0 0 3 0Z" fill="#bdbec1"/></svg>
<svg style="position:absolute;left:0px;top:845px" width="3" height="3" viewBox="0 0 3 3"><path d="M0 0H3A3 3 0 0 0 0 3Z" fill="#bdbec1"/></svg>
<svg style="position:absolute;left:971px;top:845px" width="3" height="3" viewBox="0 0 3 3"><path d="M0 0H3V3A3 3 0 0 0 0 0Z" fill="#bdbec1"/></svg>
<svg style="position:absolute;left:0px;top:189px" width="3" height="3" viewBox="0 0 3 3"><path d="M0 0A3 3 0 0 0 3 3H0Z" fill="#bdbec1"/></svg>
<svg style="position:absolute;left:971px;top:189px" width="3" height="3" viewBox="0 0 3 3"><path d="M3 0V3H0A3 3 0 0 0 3 0Z" fill="#bdbec1"/></svg>
</body></html>
